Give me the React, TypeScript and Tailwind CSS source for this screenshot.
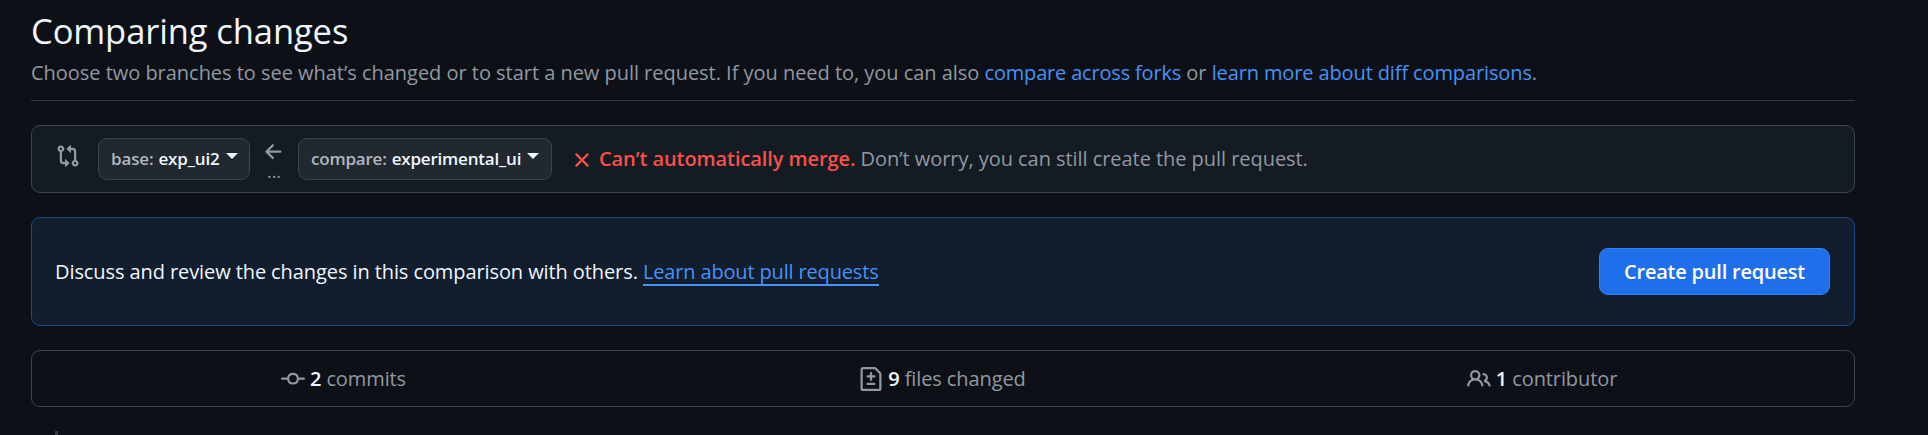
import type { ReactNode } from "react";

const icons = {
  compare:
    "M9.573.677A.25.25 0 0 1 10 .854V2.5h1A2.5 2.5 0 0 1 13.5 5v5.628a2.251 2.251 0 1 1-1.5 0V5a1 1 0 0 0-1-1h-1v1.646a.25.25 0 0 1-.427.177L7.177 3.427a.25.25 0 0 1 0-.354ZM6 12v-1.646a.25.25 0 0 1 .427-.177l2.396 2.396a.25.25 0 0 1 0 .354l-2.396 2.396A.25.25 0 0 1 6 15.146V13.5H5A2.5 2.5 0 0 1 2.5 11V5.372a2.25 2.25 0 1 1 1.5 0V11a1 1 0 0 0 1 1ZM4 3.25a.75.75 0 1 0-1.5 0 .75.75 0 0 0 1.5 0ZM12.75 12a.75.75 0 1 0 0 1.5.75.75 0 0 0 0-1.5Z",
  arrowLeft:
    "M7.78 12.53a.75.75 0 0 1-1.06 0L2.47 8.28a.75.75 0 0 1 0-1.06l4.25-4.25a.751.751 0 0 1 1.042.018.751.751 0 0 1 .018 1.042L4.81 7h7.44a.75.75 0 0 1 0 1.5H4.81l2.97 2.97a.75.75 0 0 1 0 1.06Z",
  x: "M3.72 3.72a.75.75 0 0 1 1.06 0L8 6.94l3.22-3.22a.749.749 0 0 1 1.275.326.749.749 0 0 1-.215.734L9.06 8l3.22 3.22a.749.749 0 0 1-.326 1.275.749.749 0 0 1-.734-.215L8 9.06l-3.22 3.22a.751.751 0 0 1-1.042-.018.751.751 0 0 1-.018-1.042L6.94 8 3.72 4.78a.75.75 0 0 1 0-1.06Z",
  commit:
    "M11.93 8.5a4.002 4.002 0 0 1-7.86 0H.75a.75.75 0 0 1 0-1.5h3.32a4.002 4.002 0 0 1 7.86 0h3.32a.75.75 0 0 1 0 1.5Zm-1.43-.75a2.5 2.5 0 1 0-5 0 2.5 2.5 0 0 0 5 0Z",
  fileDiff:
    "M1 1.75C1 .784 1.784 0 2.75 0h7.586c.464 0 .909.184 1.237.513l2.914 2.914c.329.328.513.773.513 1.237v9.586A1.75 1.75 0 0 1 13.25 16H2.75A1.75 1.75 0 0 1 1 14.25Zm1.75-.25a.25.25 0 0 0-.25.25v12.5c0 .138.112.25.25.25h10.5a.25.25 0 0 0 .25-.25V4.664a.25.25 0 0 0-.073-.177l-2.914-2.914a.25.25 0 0 0-.177-.073ZM8 3.25a.75.75 0 0 1 .75.75v1.5h1.5a.75.75 0 0 1 0 1.5h-1.5v1.5a.75.75 0 0 1-1.5 0V7h-1.5a.75.75 0 0 1 0-1.5h1.5V4A.75.75 0 0 1 8 3.25Zm-3 8a.75.75 0 0 1 .75-.75h4.5a.75.75 0 0 1 0 1.5h-4.5a.75.75 0 0 1-.75-.75Z",
  people:
    "M2 5.5a3.5 3.5 0 1 1 5.898 2.549 5.508 5.508 0 0 1 3.034 4.084.75.75 0 1 1-1.482.235 4 4 0 0 0-7.9 0 .75.75 0 0 1-1.482-.236A5.507 5.507 0 0 1 3.102 8.05 3.493 3.493 0 0 1 2 5.5ZM11 4a3.001 3.001 0 0 1 2.22 5.018 5.01 5.01 0 0 1 2.56 3.012.749.749 0 0 1-.885.954.752.752 0 0 1-.549-.514 3.507 3.507 0 0 0-2.522-2.372.75.75 0 0 1-.574-.73v-.352a.75.75 0 0 1 .416-.672A1.5 1.5 0 0 0 11 5.5.75.75 0 0 1 11 4Zm-5.5-.5a2 2 0 1 0-.001 3.999A2 2 0 0 0 5.5 3.5Z",
};

function Icon({ name, className }: { name: keyof typeof icons; className?: string }) {
  return (
    <svg viewBox="0 0 16 16" fill="currentColor" className={`size-6 shrink-0 ${className ?? ""}`}>
      <path d={icons[name]} />
    </svg>
  );
}

function BranchButton({ label, name, className }: { label: string; name: string; className: string }) {
  return (
    <button
      className={`mt-3 flex h-[42px] items-center rounded-[9px] border border-[#3d444d] bg-[#212830] pl-3 text-[17px] font-semibold ${className}`}
    >
      <span className="text-[#b0b7bf]">{label}</span>
      <span className="ml-[5px] text-[#f0f6fc]">{name}</span>
      <span className="mb-[6px] ml-[6px] border-x-[6px] border-t-[6px] border-x-transparent border-t-[#f0f6fc]" />
    </button>
  );
}

function Stat({ icon, count, label, className }: { icon: keyof typeof icons; count: string; label: ReactNode; className: string }) {
  return (
    <div className={`flex items-center justify-center text-[#9198a1] ${className}`}>
      <Icon name={icon} className="mr-[5px]" />
      <span className="mt-px font-semibold text-[#f0f6fc]">{count}</span>
      <span className="mt-px ml-[5px] tracking-[-0.1px]">{label}</span>
    </div>
  );
}

export default function App() {
  return (
    <div className="flex h-[435px] flex-col overflow-hidden bg-[#0d1117] pr-[73px] pl-[31px] font-['Open_Sans','Noto_Sans',sans-serif] text-[20px] leading-[30px] whitespace-nowrap">
      <header className="border-b border-[#2f353d] pt-[11px] pb-3">
        <h1 className="text-[34.5px] leading-10 tracking-[-0.1px] text-[#f0f6fc]">Comparing changes</h1>
        <p className="mt-[7px] tracking-[-0.03px] text-[#9198a1]">
          Choose two branches to see what’s changed or to start a new pull request. If you need to, you can also{" "}
          <a className="tracking-[-0.18px] text-[#4493f8]">compare across forks</a> or{" "}
          <a className="tracking-[-0.12px] text-[#4493f8]">learn more about diff comparisons</a>.
        </p>
      </header>

      <section className="mt-6 flex h-[68px] shrink-0 items-start rounded-[9px] border border-[#3d444d] bg-[#151b23]">
        <Icon name="compare" className="mt-[18px] ml-6 text-[#9198a1]" />
        <BranchButton label="base:" name="exp_ui2" className="ml-[18px] w-[152px] tracking-[-0.15px]" />
        <div className="ml-3 flex w-6 flex-col items-center text-[#9198a1]">
          <Icon name="arrowLeft" className="mt-[14px]" />
          <span className="-mt-[3px] text-[18px] leading-5">...</span>
        </div>
        <BranchButton label="compare:" name="experimental_ui" className="ml-3 w-[254px] tracking-[-0.2px]" />
        <Icon name="x" className="mt-[22px] ml-[18px] text-[#f85149]" />
        <p className="mt-[18px] ml-[5px] text-[#9198a1]">
          <strong className="font-semibold tracking-[-0.08px] text-[#f85149]">Can’t automatically merge.</strong>{" "}
          <span className="tracking-[-0.05px]">Don’t worry, you can still create the pull request.</span>
        </p>
      </section>

      <section className="mt-6 flex h-[109px] shrink-0 items-center justify-between rounded-[9px] border border-[#1f4a86] bg-[#121d2e] pr-6 pl-[23px]">
        <p className="text-[#f0f6fc]">
          <span className="tracking-[-0.09px]">Discuss and review the changes in this comparison with others.</span>{" "}
          <a className="inline-block h-[29px] border-b-2 border-[#4493f8] leading-[30px] tracking-[-0.16px] text-[#4493f8]">Learn about pull requests</a>
        </p>
        <button className="h-[47px] w-[231px] rounded-[9px] border border-[#3a7ff0] bg-[#1f6feb] pt-px font-semibold tracking-[-0.22px] text-white">
          Create pull request
        </button>
      </section>

      <section className="mt-6 flex h-[57px] shrink-0 rounded-[9px] border border-[#3d444d]">
        <Stat icon="commit" count="2" label="commits" className="w-[623px]" />
        <Stat icon="fileDiff" count="9" label="files changed" className="w-[575px]" />
        <Stat icon="people" count="1" label="contributor" className="w-[624px]" />
      </section>

      <div className="mt-6 ml-6 h-1 w-[3px] shrink-0 bg-[#343a43]" />
    </div>
  );
}
